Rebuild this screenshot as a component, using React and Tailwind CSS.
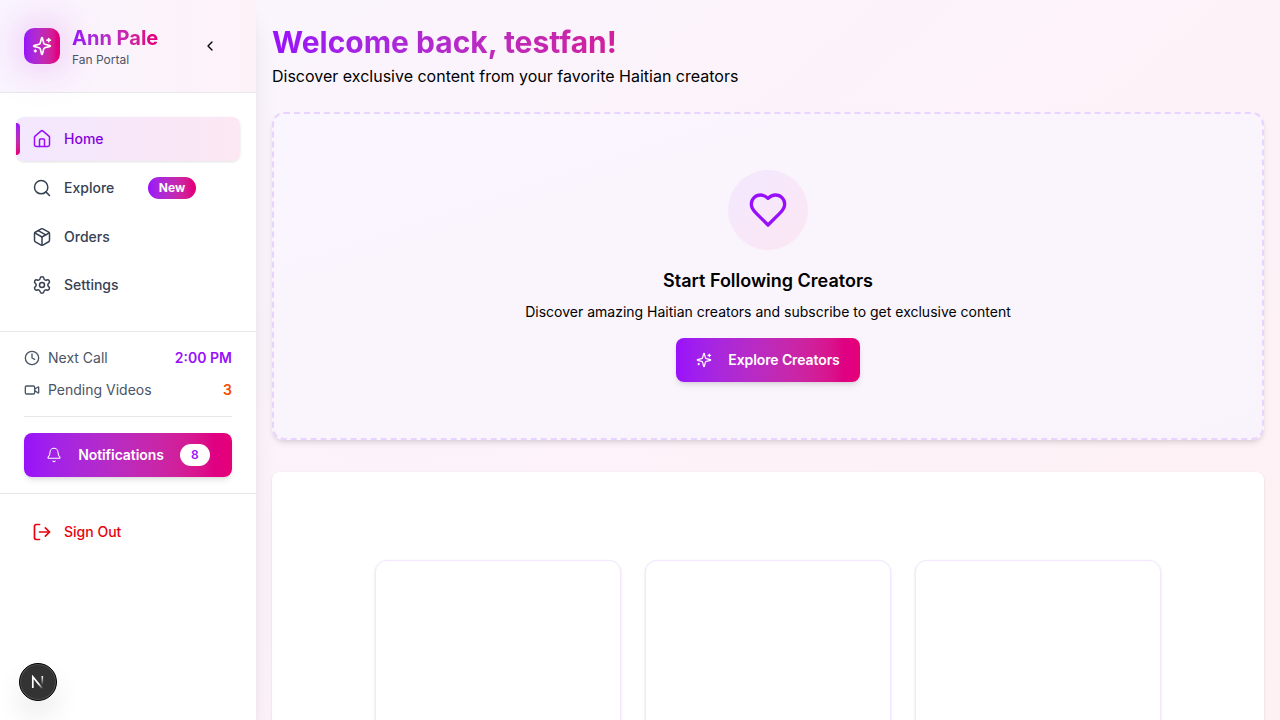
import React from "react";
import {
  ChevronLeft, House, Search, Package, Settings, Clock, Video, Bell, LogOut,
} from "lucide-react";

const navItems = [
  { label: "Home", icon: House, active: true },
  { label: "Explore", icon: Search, badge: "New" },
  { label: "Orders", icon: Package },
  { label: "Settings", icon: Settings },
];

function Sparkles({ className, strokeWidth = 2 }) {
  return (
    <svg className={className} viewBox="0 0 24 24" fill="none" stroke="currentColor" strokeWidth={strokeWidth} strokeLinecap="round" strokeLinejoin="round">
      <path d="M9.937 15.5A2 2 0 0 0 8.5 14.063l-6.135-1.582a.5.5 0 0 1 0-.962L8.5 9.936A2 2 0 0 0 9.937 8.5l1.582-6.135a.5.5 0 0 1 .963 0L14.063 8.5A2 2 0 0 0 15.5 9.937l6.135 1.581a.5.5 0 0 1 0 .964L15.5 14.063a2 2 0 0 0-1.437 1.437l-1.582 6.135a.5.5 0 0 1-.963 0z" />
      <path d="M20 3v4" />
      <path d="M22 5h-4" />
      <path d="M4 17v2" />
      <path d="M5 18H3" />
    </svg>
  );
}

function Heart({ className }) {
  return (
    <svg className={className} viewBox="0 0 24 24" fill="none" stroke="currentColor" strokeWidth={2} strokeLinecap="round" strokeLinejoin="round">
      <path d="M19 14c1.49-1.46 3-3.21 3-5.5A5.5 5.5 0 0 0 16.5 3c-1.76 0-3 .5-4.5 2-1.5-1.5-2.74-2-4.5-2A5.5 5.5 0 0 0 2 8.5c0 2.3 1.5 4.05 3 5.5l7 7Z" />
    </svg>
  );
}

function NavItem({ label, icon: Icon, active, badge }) {
  return (
    <a
      className={
        "relative flex items-center gap-3 rounded-lg px-4 py-3 text-sm font-medium " +
        (active
          ? "bg-gradient-to-r from-purple-100 to-pink-100 text-purple-700 shadow-sm"
          : "text-gray-700")
      }
    >
      {active && (
        <span className="absolute left-0 top-1.5 h-8 w-1 rounded-r-full bg-gradient-to-b from-purple-600 to-pink-600" />
      )}
      <Icon className={"h-5 w-5 " + (active ? "text-purple-600" : "text-gray-700")} strokeWidth={1.8} />
      <span className="w-18">{label}</span>
      {badge && (
        <span className="flex h-[22px] w-12 items-center justify-center rounded-full bg-gradient-to-r from-purple-600 to-pink-600 text-xs font-bold text-white">
          {badge}
        </span>
      )}
    </a>
  );
}

function Sidebar() {
  return (
    <aside className="relative flex h-full w-64 shrink-0 flex-col bg-white shadow-xl">
      <div className="flex items-center border-b border-gray-200 bg-gradient-to-r from-purple-50 to-pink-50 p-6">
        <div className="flex h-9 w-9 items-center justify-center rounded-[10px] bg-gradient-to-r from-purple-600 to-pink-600 shadow-[0_0_40px_rgba(192,38,211,0.35)]">
          <Sparkles className="h-5 w-5 text-white" />
        </div>
        <div className="ml-3 w-[130px]">
          <h2 className="w-fit bg-gradient-to-r from-purple-600 to-pink-600 bg-clip-text text-xl font-bold text-transparent">
            Ann Pale
          </h2>
          <p className="text-xs text-gray-600">Fan Portal</p>
        </div>
        <ChevronLeft className="h-4 w-4 text-black" />
      </div>

      <nav className="flex flex-col gap-1 px-4 py-6">
        {navItems.map((item) => (
          <NavItem key={item.label} {...item} />
        ))}
      </nav>

      <div className="border-t border-gray-200 px-6 py-4 text-sm">
        <div className="flex items-center gap-2 text-gray-600">
          <Clock className="h-4 w-4" />
          <span>Next Call</span>
          <span className="ml-auto font-semibold text-purple-600">2:00 PM</span>
        </div>
        <div className="mt-3 flex items-center gap-2 text-gray-600">
          <Video className="h-4 w-4" />
          <span>Pending Videos</span>
          <span className="ml-auto font-semibold text-orange-600">3</span>
        </div>
        <div className="mt-4 border-t border-gray-200 pt-4">
          <button className="flex h-11 w-full items-center justify-center rounded-lg bg-gradient-to-r from-purple-600 to-pink-600 font-semibold tracking-[-0.08px] text-white shadow-md">
            <Bell className="mr-4 h-4 w-4" strokeWidth={1.6} />
            Notifications
            <span className="ml-4 flex h-[22px] w-[30px] items-center justify-center rounded-full bg-white text-xs text-purple-600">
              8
            </span>
          </button>
        </div>
      </div>

      <div className="border-t border-gray-200 p-4">
        <a className="flex items-center gap-3 px-4 py-3 text-sm font-medium text-red-600">
          <LogOut className="h-5 w-5" />
          Sign Out
        </a>
      </div>
    </aside>
  );
}

function DevBadge() {
  return (
    <div className="absolute left-[19px] top-[663px] flex h-[38px] w-[38px] items-center justify-center rounded-full border border-black bg-[#333] shadow-[inset_0_0_0_1px_#525252,0_16px_32px_-8px_rgba(0,0,0,0.24)]">
      <svg width="14" height="14" viewBox="0 0 14 14" fill="none">
        <defs>
          <linearGradient id="diag" x1="8" y1="8.5" x2="12" y2="13.5" gradientUnits="userSpaceOnUse">
            <stop stopColor="#fff" />
            <stop offset="1" stopColor="#fff" stopOpacity="0" />
          </linearGradient>
          <linearGradient id="stem" x1="11" y1="1" x2="11" y2="10" gradientUnits="userSpaceOnUse">
            <stop stopColor="#fff" />
            <stop offset="1" stopColor="#fff" stopOpacity="0" />
          </linearGradient>
        </defs>
        <path d="M1.8 13V1.8L11.4 13.6" stroke="url(#diag)" strokeWidth="1.7" />
        <path d="M11.3 1v9" stroke="url(#stem)" strokeWidth="1.6" />
      </svg>
    </div>
  );
}

export default function App() {
  return (
    <div className="relative flex h-screen overflow-hidden bg-gradient-to-br from-purple-50 via-pink-50 to-rose-50 bg-[length:100%_1100px] font-['Inter',sans-serif] text-black">
      <Sidebar />
      <main className="flex min-w-0 flex-1 flex-col px-4 pt-6">
        <h1 className="bg-gradient-to-r from-purple-600 to-pink-600 bg-[length:466px_100%] bg-clip-text text-3xl font-bold text-transparent">
          Welcome back, testfan!
        </h1>
        <p className="mt-1">Discover exclusive content from your favorite Haitian creators</p>

        <section className="mt-6 flex h-82 shrink-0 flex-col items-center rounded-xl border-2 border-dashed border-purple-200 bg-gradient-to-br from-[#faf6ff] via-[#faf4fc] to-[#f9f4fb] pt-14 shadow-md">
          <div className="flex h-20 w-20 items-center justify-center rounded-full bg-gradient-to-br from-purple-100 to-pink-100">
            <Heart className="h-10 w-10 text-purple-600" />
          </div>
          <h3 className="mt-[17px] text-lg leading-7 font-semibold">Start Following Creators</h3>
          <p className="mt-[7px] text-sm">
            Discover amazing Haitian creators and subscribe to get exclusive content
          </p>
          <button className="mt-4 flex h-11 w-46 items-center justify-center gap-4 rounded-lg bg-gradient-to-r from-purple-600 to-pink-600 text-sm font-semibold tracking-[-0.1px] text-white shadow-md">
            <Sparkles className="h-4 w-4" strokeWidth={1.8} />
            Explore Creators
          </button>
        </section>

        <section className="mt-8 flex h-[480px] shrink-0 justify-center gap-6 rounded-lg bg-white pt-22 shadow-sm">
          <div className="h-80 w-[246px] rounded-xl border border-purple-100 bg-white shadow-sm" />
          <div className="h-80 w-[246px] rounded-xl border border-purple-100 bg-white shadow-sm" />
          <div className="h-80 w-[246px] rounded-xl border border-purple-100 bg-white shadow-sm" />
        </section>
      </main>
      <DevBadge />
    </div>
  );
}
